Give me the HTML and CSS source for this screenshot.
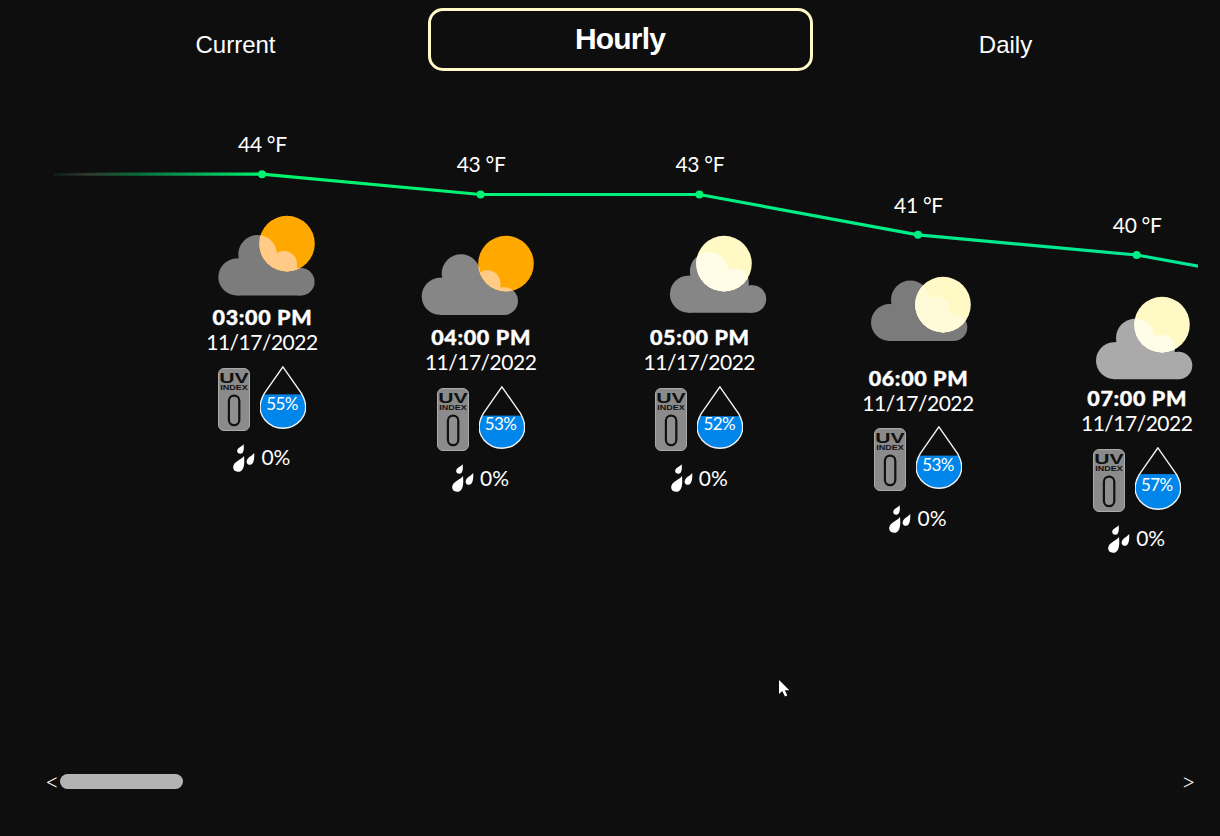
FILE: index.html
```html
<!DOCTYPE html>
<html lang="en">
<head>
<meta charset="utf-8">
<title>Hourly forecast</title>
<link rel="stylesheet" href="styles.css">
</head>
<body>
<svg class="defs" aria-hidden="true">
  <defs>
    <g id="cloud">
      <circle cx="18.5" cy="42" r="18.5"/><circle cx="39.3" cy="19.3" r="19.3"/>
      <circle cx="65.7" cy="29" r="13"/><circle cx="82.5" cy="46.8" r="13.8"/>
      <path d="M18.5 23.5H21L39 15L65 29L78.7 30V33.6L82.5 33V60.6H18.5Z"/>
    </g>
    <clipPath id="sun-clip"><circle cx="85" cy="34.6" r="27.8"/></clipPath>
    <path id="drop" d="M22.9 0.8L41.6 27.6C48 39 45.7 48.300 40.6 54.200C31 64.900 14.800 64.900 5.200 54.200C0.100 48.300 -2.200 39 4.200 27.600Z"/>
    <clipPath id="drop-clip"><use href="#drop"/></clipPath>
    <symbol id="uv" viewBox="0 0 32 63">
      <rect x=".5" y=".5" width="31" height="62" rx="5.500" fill="#8b8b8b" stroke="#aaa"/>
      <text x="1.300" y="14.800" textLength="29.400" lengthAdjust="spacingAndGlyphs" class="uv-name">UV</text>
      <text x="2.300" y="22" textLength="27.500" lengthAdjust="spacingAndGlyphs" class="uv-index">INDEX</text>
      <rect x="10.900" y="27.600" width="10.400" height="29.600" rx="5.200" fill="#8f8f8f" stroke="#111" stroke-width="2.200"/>
    </symbol>
    <symbol id="rain" viewBox="0 0 22 28">
      <path d="M10.600 0.200C11.200 4 11.100 9.800 7.300 9.800C4.200 9.800 3.300 6.700 5.200 4.600C6.700 3 9.300 2.200 10.600 0.200Z"/>
      <path d="M11 12C11.400 17 12.300 27.800 4.900 27.800C0 27.800-1.300 22.600 2 19C4.700 16.200 9 15 11 12Z"/>
      <path d="M21.200 9C21.500 13.500 21.200 20.800 17 20.800C13.500 20.800 12.600 17.200 14.900 14.400C16.500 12.400 19.500 11.500 21.200 9Z"/>
    </symbol>
  </defs>
</svg>

<nav class="tabs">
  <a class="tab">Current</a>
  <a class="tab active">Hourly</a>
  <a class="tab">Daily</a>
</nav>

<main class="forecast">
  <svg class="trend" width="1155" height="160" viewBox="43 120 1155 160">
    <defs>
      <linearGradient id="fade" gradientUnits="userSpaceOnUse" x1="53" y1="0" x2="262" y2="0">
        <stop offset="0" stop-color="#0b2b20" stop-opacity=".6"/><stop offset=".15" stop-color="#30352a"/><stop offset=".4" stop-color="#0a6a3a"/>
        <stop offset=".65" stop-color="#08a055"/><stop offset="1" stop-color="#00f56c"/>
      </linearGradient>
      <linearGradient id="green" gradientUnits="userSpaceOnUse" x1="262" y1="0" x2="1198" y2="0">
        <stop offset="0" stop-color="#00f56c"/><stop offset="1" stop-color="#00e896"/>
      </linearGradient>
    </defs>
    <path d="M53 173.200L120 172.500H262V175.800H53Z" fill="url(#fade)"/>
    <path d="M262 174.200L480.600 194.500H699.400L918 234.800L1136.700 255L1200 266.500" fill="none" stroke="url(#green)" stroke-width="3.200"/>
    <g fill="#00f473"><circle cx="262" cy="174.200" r="4"/><circle cx="480.600" cy="194.500" r="4"/><circle cx="699.400" cy="194.500" r="4"/></g>
    <g fill="#00ee84"><circle cx="918" cy="234.800" r="4"/><circle cx="1136.700" cy="255" r="4"/></g>
  </svg>

  <section class="hour t44">
    <p class="temp">44 °F</p>
    <svg class="sky day" width="120" height="85"><use href="#cloud" x="16.300" y="26" fill="#7c7c7c"/><circle class="sun" cx="85" cy="34.600" r="27.800"/><g clip-path="url(#sun-clip)"><use class="glow" href="#cloud" x="16.300" y="26"/></g></svg>
    <p class="time">03:00 PM</p><p class="date">11/17/2022</p>
    <div class="gauges"><svg class="uv"><use href="#uv"/></svg><div class="humidity"><svg width="46" height="65"><rect y="28.400" width="46" height="40" fill="#0086eb" clip-path="url(#drop-clip)"/><use class="outline" href="#drop"/></svg><span>55%</span></div></div>
    <div class="rain"><svg><use href="#rain"/></svg><span>0%</span></div>
  </section>

  <section class="hour t43">
    <p class="temp">43 °F</p>
    <svg class="sky day" width="120" height="85"><use href="#cloud" x=".7" y="25.300" fill="#868686"/><circle class="sun" cx="85" cy="34.600" r="27.800"/><g clip-path="url(#sun-clip)"><use class="glow" href="#cloud" x=".7" y="25.300"/></g></svg>
    <p class="time">04:00 PM</p><p class="date">11/17/2022</p>
    <div class="gauges"><svg class="uv"><use href="#uv"/></svg><div class="humidity"><svg width="46" height="65"><rect y="29.600" width="46" height="40" fill="#0086eb" clip-path="url(#drop-clip)"/><use class="outline" href="#drop"/></svg><span>53%</span></div></div>
    <div class="rain"><svg><use href="#rain"/></svg><span>0%</span></div>
  </section>

  <section class="hour t43">
    <p class="temp">43 °F</p>
    <svg class="sky night" width="120" height="85"><use href="#cloud" x="30.900" y="23.200" fill="#868686"/><circle class="sun" cx="85" cy="34.600" r="27.800"/><g clip-path="url(#sun-clip)"><use class="glow" href="#cloud" x="30.900" y="23.200"/></g></svg>
    <p class="time">05:00 PM</p><p class="date">11/17/2022</p>
    <div class="gauges"><svg class="uv"><use href="#uv"/></svg><div class="humidity"><svg width="46" height="65"><rect y="30.200" width="46" height="40" fill="#0086eb" clip-path="url(#drop-clip)"/><use class="outline" href="#drop"/></svg><span>52%</span></div></div>
    <div class="rain"><svg><use href="#rain"/></svg><span>0%</span></div>
  </section>

  <section class="hour t41">
    <p class="temp">41 °F</p>
    <svg class="sky night" width="120" height="85"><use href="#cloud" x="13" y="10.500" fill="#7b7b7b"/><circle class="sun" cx="85" cy="34.600" r="27.800"/><g clip-path="url(#sun-clip)"><use class="glow dim" href="#cloud" x="13" y="10.500"/></g></svg>
    <p class="time">06:00 PM</p><p class="date">11/17/2022</p>
    <div class="gauges"><svg class="uv"><use href="#uv"/></svg><div class="humidity"><svg width="46" height="65"><rect y="29.600" width="46" height="40" fill="#0086eb" clip-path="url(#drop-clip)"/><use class="outline" href="#drop"/></svg><span>53%</span></div></div>
    <div class="rain"><svg><use href="#rain"/></svg><span>0%</span></div>
  </section>

  <section class="hour t40">
    <p class="temp">40 °F</p>
    <svg class="sky night" width="120" height="85"><use href="#cloud" x="19" y="28.700" fill="#aaa"/><circle class="sun" cx="85" cy="34.600" r="27.800"/><g clip-path="url(#sun-clip)"><use class="glow" href="#cloud" x="19" y="28.700"/></g></svg>
    <p class="time">07:00 PM</p><p class="date">11/17/2022</p>
    <div class="gauges"><svg class="uv"><use href="#uv"/></svg><div class="humidity"><svg width="46" height="65"><rect y="27.100" width="46" height="40" fill="#0086eb" clip-path="url(#drop-clip)"/><use class="outline" href="#drop"/></svg><span>57%</span></div></div>
    <div class="rain"><svg><use href="#rain"/></svg><span>0%</span></div>
  </section>
</main>

<div class="scroller">
  <span class="arrow">&lt;</span><div class="track"><div class="thumb"></div></div><span class="arrow">&gt;</span>
</div>

<svg class="pointer" width="12" height="18" viewBox="0 0 12 18"><path d="M0 0V14L3.200 11L6 16.500L8.300 15.500L5.800 10.300H10.300Z" fill="#fff"/></svg>
</body>
</html>
```
FILE: styles.css
```css
* { box-sizing: border-box; }
body {
  margin: 0; width: 1220px; height: 836px; padding: 8px 0 0 43px;
  overflow: hidden; background: #0e0e0e; color: #fff;
  font-family: Lato, "Noto Sans", sans-serif;
  display: flex; flex-direction: column;
}
p { margin: 0; white-space: nowrap; }
svg { display: block; flex: none; }
.defs { position: absolute; width: 0; height: 0; }
.tabs {
  display: grid; grid-template-columns: repeat(3, 385px); height: 63px;
  font-family: "Liberation Sans", Arial, sans-serif; font-size: 24px;
}
.tab { display: flex; align-items: center; justify-content: center; padding-top: 10px; }
.tab.active {
  border: 3px solid #fffac8; border-radius: 15px; padding: 0 1px 1px 0;
  font-size: 30px; font-weight: bold; letter-spacing: -.8px;
}
.forecast {
  position: relative; display: flex; align-items: flex-start; overflow: hidden;
  width: 1177px; height: 702px; padding-left: 109.600px;
}
.trend { position: absolute; left: 0; top: 49px; }
.hour {
  position: relative; flex: 0 0 218.700px; display: flex; flex-direction: column;
  align-items: center; font-size: 21px;
}
.hour:last-child { margin-right: -26px; }
.t44 { padding-top: 60px; }
.t43 { padding-top: 80.300px; }
.t41 { padding-top: 120.800px; }
.t40 { padding-top: 141px; }
.temp { height: 26px; line-height: 26px; letter-spacing: -.3px; padding-left: 1px; }
.sky { margin-top: 52px; overflow: visible; }
.day .sun { fill: #ffa800; }
.day .glow { fill: #ffcb87; }
.night .sun { fill: #fff9c6; }
.night .glow { fill: #fffde8; }
.night .dim { fill: #fffbd9; }
.time {
  margin-top: 11px; height: 24px; line-height: 25px; font-weight: 900; font-size: 21.500px;
  letter-spacing: .65px; -webkit-text-stroke: .4px #fff; padding-left: 1px;
}
.date { height: 25px; line-height: 25px; letter-spacing: -.5px; }
.gauges { display: flex; gap: 10px; margin-top: 11.500px; height: 65px; }
.uv { width: 32px; height: 63px; margin-top: 2px; }
.uv-name { font: bold 14px "Liberation Sans", Arial, sans-serif; fill: #111; }
.uv-index { font: bold 6.400px "Liberation Sans", Arial, sans-serif; fill: #111; }
.humidity { display: grid; width: 46px; height: 65px; }
.humidity > * { grid-area: 1 / 1; }
.humidity span { padding: 28.500px 2px 0 0; line-height: 20px; text-align: center; font-size: 17px; letter-spacing: -.6px; }
.outline { fill: none; stroke: #f2f2f2; stroke-width: 1.400; }
.rain { display: flex; align-items: center; gap: 6px; margin-top: 13.500px; height: 28px; }
.rain svg { width: 22px; height: 28px; fill: #fff; }
.rain span { padding-bottom: 2.600px; }
.scroller { display: flex; align-items: center; height: 16px; padding-left: 2px; width: 1153px; font-size: 25px; font-weight: 300; line-height: 16px; }
.arrow { width: 15px; flex: none; }
.track { flex: 1; }
.thumb { width: 123px; height: 15px; border-radius: 8px; background: #b3b3b3; }
.pointer { position: absolute; left: 779px; top: 680px; }
```
